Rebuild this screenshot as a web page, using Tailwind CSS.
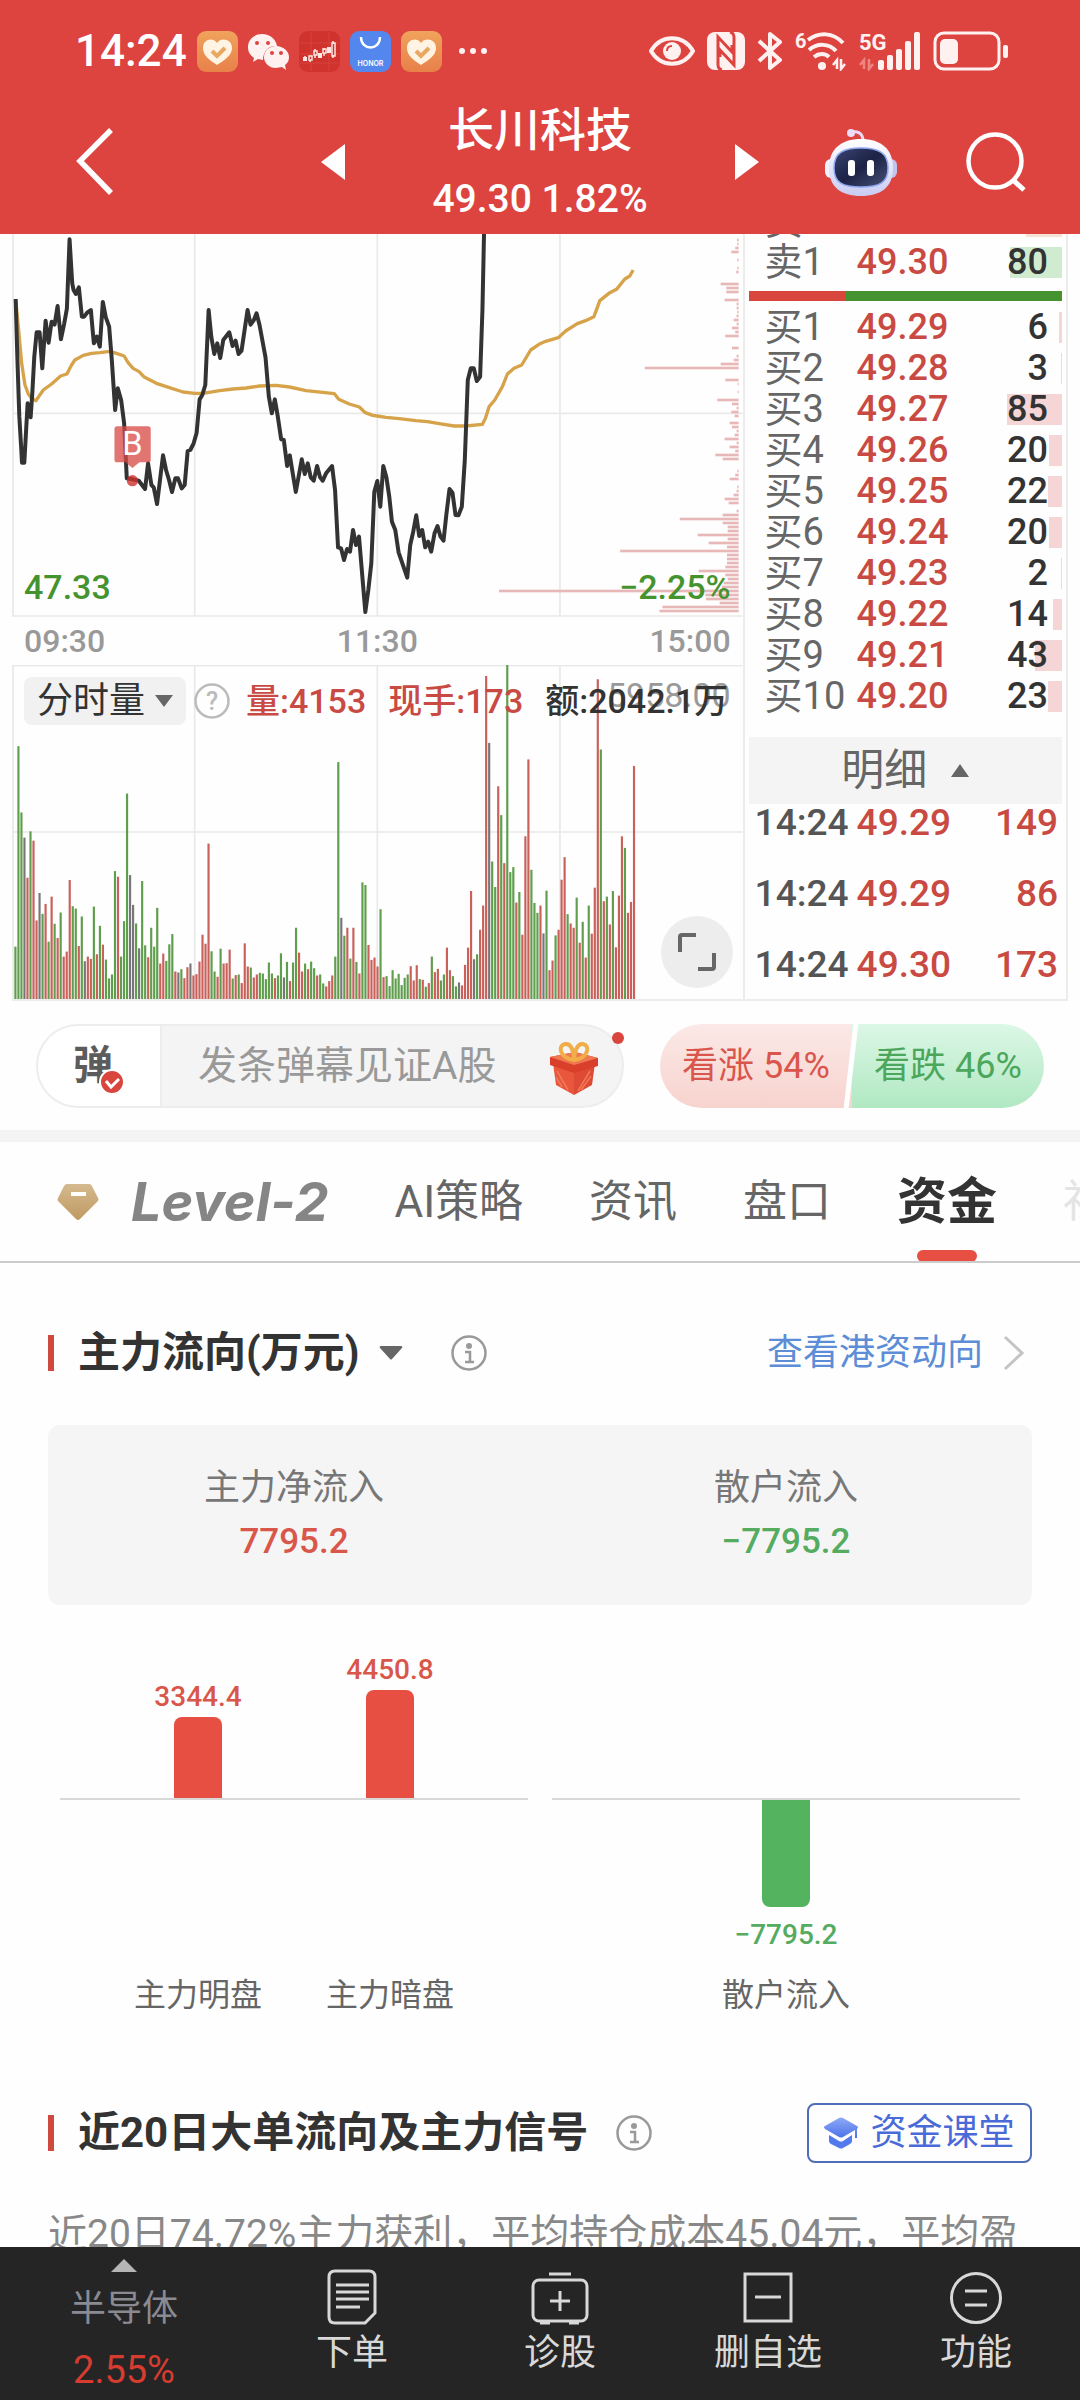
<!DOCTYPE html>
<html lang="zh-CN">
<head>
<meta charset="utf-8">
<meta name="viewport" content="width=device-width, initial-scale=1">
<title>长川科技</title>
<script src="https://cdn.jsdelivr.net/npm/@tailwindcss/browser@4"></script>
</head>
<body class="flex h-screen flex-col overflow-hidden bg-[#fefefe] font-[Roboto,'Noto_Sans_CJK_SC',sans-serif] text-[#333]">

<header class="shrink-0 bg-[#dd4440] text-white">
  <div class="flex h-[102px] items-center justify-between pl-[75px] pr-[71px]">
    <div class="flex items-center gap-[10px]">
      <span class="w-[112px] text-[44px] font-medium leading-none">14:24</span>
      <svg class="size-[41px]" viewBox="0 0 41 41"><defs><linearGradient id="or" x2="0" y2="1"><stop stop-color="#f0a35c"/><stop offset="1" stop-color="#e8804a"/></linearGradient></defs><rect width="41" height="41" rx="9" fill="url(#or)"/><path d="M20 34C12 29 6 24 6 17c0-9 10-11 14-5 4-6 15-4 15 5 0 7-7 12-15 17Z" fill="#fff4e4"/><path d="m15 20 5 5 8-8" fill="none" stroke="#e9a862" stroke-width="4"/></svg>
      <svg class="size-[41px]" viewBox="0 0 41 41" fill="#fff1f0"><path d="M14 3C6 3 0 9 0 16c0 5 2 8 6 11l-1 4 5-3 5 1c0-9 6-15 14-14C28 8 22 3 14 3Z"/><path d="M28 15c-7 0-12 5-12 11s5 11 12 11l6-1 4 3-1-5c3-2 4-5 4-8 0-6-6-11-13-11Z"/><g fill="#dd4440"><circle cx="9" cy="12" r="2"/><circle cx="20" cy="12" r="2"/><circle cx="24" cy="22" r="2"/><circle cx="33" cy="22" r="2"/></g></svg>
      <svg class="size-[41px]" viewBox="0 0 41 41"><rect width="41" height="41" rx="9" fill="#d0332e"/><path d="M12 1v39M30 1v39M1 12h39M1 23h39M1 32h39" stroke="#d8433d" stroke-width="1"/><g fill="none" stroke="#ffe6e2" stroke-width="1.500"><path d="M6 25v5M16 18v2M16 24v3M25 17v2M25 22v3M34 10v3M34 24v3M11 29v2"/><rect x="10" y="25" width="3" height="4"/><rect x="15" y="20" width="3" height="4"/><rect x="24" y="18" width="3" height="4"/><rect x="33" y="12" width="3" height="13"/></g><path d="M4 26h4v4H4zM19 22h4v5h-4zM28 16h4v6h-4z" fill="#ffe6e2"/></svg>
      <svg class="size-[41px]" viewBox="0 0 41 41"><rect width="41" height="41" rx="9" fill="#5487ee"/><path d="M11 6c0 14 19 14 19 0" fill="none" stroke="#fff" stroke-width="2.400"/><text x="20.500" y="35" text-anchor="middle" font-family="Inter" font-size="7" font-weight="600" fill="#fff">HONOR</text></svg>
      <svg class="size-[41px]" viewBox="0 0 41 41"><rect width="41" height="41" rx="9" fill="url(#or)"/><path d="M20 34C12 29 6 24 6 17c0-9 10-11 14-5 4-6 15-4 15 5 0 7-7 12-15 17Z" fill="#fff4e4"/><path d="m15 20 5 5 8-8" fill="none" stroke="#e9a862" stroke-width="4"/></svg>
      <svg class="ml-1 h-2 w-9" viewBox="0 0 36 8" fill="#fff1f0"><circle cx="6" cy="4" r="3"/><circle cx="17" cy="4" r="3"/><circle cx="28" cy="4" r="3"/></svg>
    </div>
    <div class="flex items-center gap-3">
      <svg class="h-8 w-[46px]" viewBox="0 0 46 32" fill="none" stroke="#fff1f0"><path d="M2 16C12-1 34-1 44 16 34 33 12 33 2 16Z" stroke-width="4"/><circle cx="23" cy="16" r="9" fill="#fff1f0" stroke="none"/><path d="M18 16c0-3 2-5 5-5" stroke="#dd4440" stroke-width="2"/></svg>
      <svg class="h-[38px] w-[38px]" viewBox="0 0 38 38"><rect width="38" height="38" rx="8" fill="#fff1f0"/><g fill="none" stroke="#dd4440" stroke-width="3"><path d="M15 38q-4-1-4-5V5l14 15v-7"/><path d="M23 0q4 1 4 5v28L13 18v7"/></g></svg>
      <svg class="h-[38px] w-[26px]" viewBox="0 0 26 38" fill="none" stroke="#fff1f0" stroke-width="4" stroke-linejoin="round"><path d="m2 9 21 19-10 8V2l10 8L2 29"/></svg>
      <svg class="h-[40px] w-[52px]" viewBox="0 0 52 40" fill="none" stroke="#fff1f0" stroke-width="4"><path d="M13 9c11-8 25-8 35 3M14 19c8-7 20-7 27 1M19 26c5-4 11-4 15 0"/><circle cx="27" cy="35" r="4" fill="#fff1f0" stroke="none"/><path d="M42 38V29l-4 5M46 28v10l4-5" stroke-width="2.500"/><text x="0" y="17" font-family="Roboto" font-size="20" font-weight="700" fill="#fff1f0" stroke="none">6</text></svg>
      <svg class="h-[40px] w-[62px]" viewBox="0 0 62 40" fill="#fff1f0"><text x="0" y="19" font-family="Roboto" font-size="22" font-weight="700">5G</text><rect x="19" y="29" width="6" height="10" rx="2"/><rect x="28" y="24" width="6" height="15" rx="2"/><rect x="37" y="18" width="6" height="21" rx="2"/><rect x="46" y="10" width="6" height="29" rx="2"/><rect x="55" y="1" width="6" height="38" rx="2"/><path d="M5 38V29l-4 5M10 28v10l4-5" fill="none" stroke="#ef8580" stroke-width="2.500"/></svg>
      <svg class="h-[40px] w-[76px]" viewBox="0 0 76 40"><rect x="2" y="2" width="64" height="36" rx="9" fill="none" stroke="#fff1f0" stroke-width="3"/><rect x="7" y="8" width="18" height="25" rx="5" fill="#fff1f0"/><rect x="70" y="14" width="5" height="13" rx="2" fill="#fff1f0"/></svg>
    </div>
  </div>
  <div class="grid h-[132px] grid-cols-[1fr_438px_1fr] items-center pb-3">
    <button aria-label="返回" class="ml-[74px] w-10"><svg class="h-[68px] w-10" viewBox="0 0 40 68" fill="none" stroke="#fff" stroke-width="5.500"><path d="M37 2 6 33l31 32"/></svg></button>
    <div class="flex items-center justify-between">
      <button aria-label="上一只"><svg class="h-9 w-6" viewBox="0 0 24 36" fill="#fff"><path d="M24 0v36L0 18Z"/></svg></button>
      <h1 class="flex flex-col items-center gap-6 font-normal">
        <span class="text-[46px] font-medium leading-[50px]">长川科技</span>
        <span class="text-[39px] font-medium leading-[40px]">49.30 1.82%</span>
      </h1>
      <button aria-label="下一只"><svg class="h-9 w-6" viewBox="0 0 24 36" fill="#fff"><path d="M0 0v36l24-18Z"/></svg></button>
    </div>
    <div class="flex items-center justify-end gap-[69px] pr-[53px]">
      <button aria-label="智能助手"><svg class="h-[68px] w-[72px]" viewBox="0 0 72 68"><defs><linearGradient id="hd" x2="0" y2="1"><stop stop-color="#fff"/><stop offset="1" stop-color="#c9cbf2"/></linearGradient><linearGradient id="fc" x2="1" y2="1"><stop stop-color="#3c4372"/><stop offset=".5" stop-color="#1c2346"/><stop offset="1" stop-color="#4a5078"/></linearGradient></defs><path d="M25 5c7-3 13 0 13 8" fill="none" stroke="#efd9f2" stroke-width="3"/><circle cx="26" cy="5" r="4" fill="#ecdcf6"/><rect x="0" y="31" width="12" height="19" rx="6" fill="#f2f1fd"/><rect x="60" y="31" width="12" height="19" rx="6" fill="#c3c4ee"/><path d="M36 11c20 0 32 10 32 29S56 68 36 68 4 59 4 40s12-29 32-29Z" fill="url(#hd)"/><path d="M36 20c18 0 27 5 27 20s-9 19-27 19S9 55 9 40s9-20 27-20Z" fill="url(#fc)" stroke="#8fa6f0" stroke-width="1.500"/><rect x="23" y="32" width="7" height="16" rx="3" fill="#fff"/><rect x="42" y="32" width="7" height="16" rx="3" fill="#fff"/></svg></button>
      <button aria-label="搜索"><svg class="h-[60px] w-[61px]" viewBox="0 0 61 60" fill="none" stroke="#fff" stroke-width="4.500"><circle cx="29" cy="29" r="26.500"/><path d="m47 48 11 10" stroke-width="5"/></svg></button>
    </div>
  </div>
</header>

<main class="min-h-0 flex-1 overflow-hidden">

  <section class="mx-3 grid grid-cols-[734fr_322fr] border-r-2 border-b-2 border-[#ececec]">
    <div class="border-r-2 border-[#ececec]">
      <div class="relative h-[383px]">
        <svg class="block h-full w-full" viewBox="36 12 2196 1149" preserveAspectRatio="none">
          <g stroke="#e9e9e9" stroke-width="5"><path d="M39 0V1158M585 0V1158M1134 0V1158M1683 0V1158M36 550H2232M36 1158H2232"/></g>
          <g id="chips" fill="#e8b7b7"></g>
          <path fill="none" stroke="#d6a34a" stroke-width="10" stroke-linejoin="round" d="M47 207 55 290 65 400 75 465 85 492 95 505 108 512 130 480 155 462 182 438 201 432 215 405 225 390 250 376 275 370 300 368 330 364 350 370 373 378 385 398 400 415 418 425 432 440 470 460 500 470 550 486 585 490 610 490 660 482 700 477 740 474 780 468 830 466 870 471 920 482 1005 491 1018 508 1050 522 1080 531 1098 548 1120 556 1134 558 1160 562 1200 566 1250 572 1285 575 1320 581 1365 588 1400 588 1450 583 1459 565 1470 530 1487 510 1510 470 1525 432 1545 415 1568 405 1595 360 1620 343 1640 334 1678 323 1700 303 1735 281 1760 272 1785 260 1803 212 1830 190 1853 178 1878 147 1893 138 1903 120"/>
          <path fill="none" stroke="#333" stroke-width="12" stroke-linejoin="round" d="M47 207 52 380 58 560 64 660 66 698 73 698 79 590 83 520 92 562 97 490 103 380 110 307 119 307 127 415 137 272 146 338 155 275 164 284 173 228 183 328 193 280 201 236 209 28 217 160 221 180 228 192 237 172 246 260 253 260 262 248 273 240 282 340 291 320 300 350 309 216 318 262 328 290 336 390 346 540 354 475 364 510 373 580 381 745 398 748 417 752 436 777 445 700 455 765 462 772 472 822 490 676 499 720 508 750 517 786 527 745 535 745 546 775 555 765 564 663 572 660 582 640 591 608 600 508 608 495 617 465 627 240 635 320 644 372 653 340 662 384 671 330 689 307 699 348 708 332 717 372 726 362 744 240 753 284 763 270 771 250 780 285 798 382 808 500 817 550 826 508 835 560 845 628 853 630 863 708 871 676 889 786 907 688 916 732 925 700 934 742 943 752 953 708 962 742 970 752 980 730 998 708 1007 780 1016 952 1025 955 1034 990 1043 957 1052 965 1061 900 1070 945 1079 920 1098 1146 1107 1080 1116 1000 1125 785 1134 753 1143 830 1152 708 1161 740 1170 800 1178 875 1188 900 1198 967 1224 1043 1233 945 1242 905 1251 856 1260 918 1269 900 1278 952 1287 935 1296 965 1306 910 1315 888 1324 920 1333 932 1342 850 1351 777 1360 788 1369 855 1378 856 1388 830 1397 690 1406 450 1415 415 1424 415 1433 453 1443 440 1450 240 1455 0"/>
          <path fill="#d84a45" fill-opacity=".76" d="M352 589h93q8 0 8 8v92q0 8-8 8h-26l-21 17-21-17h-25q-8 0-8-8v-92q0-8 8-8Z"/>
          <circle cx="398" cy="752" r="17" fill="#cc322d" fill-opacity=".8"/>
          <text x="398" y="675" text-anchor="middle" font-family="Roboto" font-size="98" fill="#fff">B</text>
        </svg>
        <div class="absolute inset-x-3 bottom-3 flex justify-between text-[34px] font-medium leading-[36px] text-[#45932f]"><span>47.33</span><span>−2.25%</span></div>
      </div>
      <div class="flex h-12 items-center justify-between px-3 text-[32px] font-medium leading-[36px] text-[#999]"><span>09:30</span><span>11:30</span><span>15:00</span></div>
      <div class="relative h-[334px]">
        <svg id="volume" class="block h-full w-full" viewBox="36 45 2196 1008" preserveAspectRatio="none">
          <g stroke="#e9e9e9" stroke-width="5"><path d="M39 47V1053M585 47V1053M1134 47V1053M1683 47V1053M36 47H2232M36 549H2232"/></g>
        </svg>
        <span class="absolute top-3 right-3 text-[34px] leading-[36px] text-[#999]">5958.00</span>
        <div class="absolute inset-x-3 top-3 flex items-center text-[34px] font-medium leading-[48px] whitespace-nowrap">
          <button class="flex h-12 w-[162px] items-center justify-center gap-[10px] rounded-lg bg-[#f1f1f1] text-[36px] font-normal">分时量<svg class="h-3 w-[18px]" viewBox="0 0 18 12" fill="#666"><path d="M0 0h18L9 12Z"/></svg></button>
          <button aria-label="说明" class="ml-2"><svg class="size-9" viewBox="0 0 36 36"><circle cx="18" cy="18" r="16.500" fill="none" stroke="#bbb" stroke-width="2.500"/><text x="18" y="27" text-anchor="middle" font-family="Roboto" font-size="25" fill="#bbb">?</text></svg></button>
          <span class="ml-4 text-[#c94a42]">量:4153</span>
          <span class="ml-[22px] text-[#c94a42]">现手:173</span>
          <span class="ml-[22px]">额:2042.1万</span>
        </div>
        <button aria-label="全屏" class="absolute right-[10px] bottom-[11px] flex size-[72px] items-center justify-center rounded-full bg-[#ededed]"><svg class="size-[38px]" viewBox="0 0 38 38" fill="none" stroke="#666" stroke-width="4"><path d="M2 19V4q0-2 2-2h14M36 20v14q0 2-2 2H20"/></svg></button>
      </div>
    </div>

    <div class="px-1">
      <div class="flex h-[8px] items-end overflow-hidden"><table class="w-full table-fixed"><tbody id="ask2"></tbody></table></div>
      <table class="w-full table-fixed"><tbody id="ask1"></tbody></table>
      <div class="mt-[8px] mb-[6px] flex h-[10px]"><span class="w-[31%] bg-[#d8463e]"></span><span class="flex-1 bg-[#45932f]"></span></div>
      <table class="w-full table-fixed"><tbody id="bids"></tbody></table>
      <button class="mt-[20px] flex h-[67px] w-full items-center justify-center gap-6 bg-[#f4f4f4] text-[43px] leading-[67px] text-[#666]">明细<svg class="h-[13px] w-[18px]" viewBox="0 0 18 13" fill="#666"><path d="M0 13h18L9 0Z"/></svg></button>
      <div class="h-[195px] overflow-hidden"><table class="-mt-[17px] w-full table-fixed"><tbody id="trades"></tbody></table></div>
    </div>
  </section>

  <section class="grid h-[129px] grid-cols-[588fr_384fr] items-center gap-9 px-9">
    <div class="relative flex h-[84px] min-w-0 items-center rounded-full border-2 border-[#ededed] bg-[#f4f4f4]">
      <button aria-label="弹幕" class="flex h-full w-[124px] shrink-0 items-center justify-center rounded-l-full border-r-2 border-[#ededed] bg-white">
        <span class="relative mr-3 text-[40px] font-bold leading-[50px] text-[#5c5c5c]">弹
          <svg class="absolute -right-3 -bottom-1 size-[26px]" viewBox="0 0 26 26"><circle cx="13" cy="13" r="12" fill="#d8463e" stroke="#fff" stroke-width="2"/><path d="m7 12 5 6 8-8" fill="none" stroke="#fff" stroke-width="3"/></svg></span>
      </button>
      <input aria-label="发送弹幕" placeholder="发条弹幕见证A股" class="h-full w-0 flex-1 bg-transparent pl-9 text-[39px] outline-none placeholder:text-[#999]">
      <button aria-label="礼物" class="mr-[22px] shrink-0"><svg class="mt-1 h-[54px] w-[52px]" viewBox="0 0 52 54"><path d="m5 22 21 6v26L8 44Z" fill="#e8573c"/><path d="m47 22-21 6v26l18-10Z" fill="#de4a33"/><path d="m30 50 12-20M33 49l10-14M14 46 8 36M20 49 9 30" stroke="#f0795a" stroke-width="1.500"/><path d="m2 16 25-5 23 6v8l-24 7L2 24Z" fill="#d93f2b"/><path d="m2 16 25-5 23 6-24 7Z" fill="#f07a50"/><path d="M26 19C12 17 9 5 17 3c6-1 9 7 9 16 0-9 4-17 9-16 8 2 5 14-9 16Z" fill="none" stroke="#f1ae48" stroke-width="4"/></svg></button>
      <span class="absolute -right-[2px] top-[6px] size-3 rounded-full bg-[#d8463e]"></span>
    </div>
    <div class="relative grid h-[84px] grid-cols-2 overflow-hidden rounded-full text-[36px] whitespace-nowrap">
      <button class="bg-linear-to-b from-[#fbe9e7] to-[#f7d3ce] text-[#d8564c]">看涨 54%</button>
      <button class="bg-linear-to-b from-[#dcf7e6] to-[#b0e8c2] text-[#4ca65c]">看跌 46%</button>
      <svg class="absolute inset-y-0 left-1/2 h-full w-5 -translate-x-1/2" viewBox="0 0 20 84"><path d="M14 -1 4 85" stroke="#fff" stroke-width="5"/></svg>
    </div>
  </section>

  <div class="h-3 bg-[#f4f4f4]"></div>

  <nav class="flex h-[121px] items-center gap-[66px] overflow-hidden border-b-2 border-[#ccc] pl-[57px] text-[44px] leading-[60px] whitespace-nowrap text-[#666]">
    <a href="#" class="flex items-center gap-8"><svg class="h-[38px] w-[42px]" viewBox="0 0 42 38"><defs><linearGradient id="gd" x2="0" y2="1"><stop stop-color="#d5b98f"/><stop offset="1" stop-color="#bf9a62"/></linearGradient></defs><path d="M10 1h22q2 0 3 2l6 12q1 2 0 3L23 36q-2 2-4 0L1 18q-1-1 0-3L7 3q1-2 3-2Z" fill="url(#gd)"/><path d="M14 11h15" stroke="#fff" stroke-width="4"/></svg><span class="font-[Inter,sans-serif] text-[54px] font-bold text-[#858585] italic">Level-2</span></a>
    <a href="#">AI策略</a>
    <a href="#">资讯</a>
    <a href="#">盘口</a>
    <a href="#" class="relative text-[50px] font-bold leading-[120px] text-[#333]">资金<span class="absolute bottom-0 left-1/2 h-3 w-[60px] -translate-x-1/2 rounded-full bg-[#e64f42]"></span></a>
    <a href="#" class="text-[#e4e4e4]">社区</a>
  </nav>

  <section class="px-12 pt-[72px]">
    <div class="flex h-9 items-center">
      <span class="mr-6 h-9 w-[6px] bg-[#d0493f]"></span>
      <h2 class="text-[42px] font-bold leading-[42px]">主力流向(万元)</h2>
      <button aria-label="切换单位" class="ml-5"><svg class="block h-[14px] w-6" viewBox="0 0 24 14" fill="#666"><path d="M2 0h20q2 0 1 2L13 13q-1 1-2 0L1 2Q0 0 2 0Z"/></svg></button>
      <button aria-label="说明" class="ml-12"><svg class="block size-9" viewBox="0 0 36 36"><circle cx="18" cy="18" r="16.500" fill="none" stroke="#999" stroke-width="2.500"/><circle cx="18" cy="11" r="3" fill="#999"/><path d="M14 17h5v10M14 27h9" fill="none" stroke="#999" stroke-width="2.500"/></svg></button>
      <a href="#" class="ml-auto flex items-center gap-5 pr-2 text-[36px] leading-9 text-[#5c8dd6]">查看港资动向<svg class="h-9 w-[21px]" viewBox="0 0 21 36" fill="none" stroke="#c4c4c4" stroke-width="3"><path d="m2 2 17 16L2 34"/></svg></a>
    </div>
    <dl class="mt-[54px] grid grid-cols-2 rounded-xl bg-[#f5f5f5] py-9 text-center text-[36px] leading-[54px]">
      <div><dt class="text-[#777]">主力净流入</dt><dd class="text-[35px] font-medium text-[#d9564a]">7795.2</dd></div>
      <div><dt class="text-[#777]">散户流入</dt><dd class="text-[35px] font-medium text-[#55ab60]">−7795.2</dd></div>
    </dl>
    <div class="grid grid-cols-2 gap-6 px-3 text-center text-[32px] leading-10 text-[#666]">
      <div>
        <div class="flex h-[195px] items-end justify-center border-b-2 border-[#d9d9d9] text-[28px] font-medium text-[#d9564a]">
          <div class="flex w-[192px] flex-col items-center">3344.4<span class="w-12 rounded-t-lg bg-[#e64f42]" style="height:81px"></span></div>
          <div class="flex w-[192px] flex-col items-center">4450.8<span class="w-12 rounded-t-lg bg-[#e64f42]" style="height:108px"></span></div>
        </div>
        <div class="flex justify-center pt-[175px]"><span class="w-[192px]">主力明盘</span><span class="w-[192px]">主力暗盘</span></div>
      </div>
      <div>
        <div class="h-[195px] border-b-2 border-[#d9d9d9]"></div>
        <div class="flex h-[175px] flex-col items-center gap-2 text-[28px] font-medium text-[#55ab60]"><span class="w-12 rounded-b-lg bg-[#53b35e]" style="height:107px"></span>−7795.2</div>
        <span>散户流入</span>
      </div>
    </div>
  </section>

  <section class="mt-[88px] px-12">
    <div class="flex h-[60px] items-center">
      <span class="mr-6 h-9 w-[6px] bg-[#d0493f]"></span>
      <h2 class="text-[42px] font-bold leading-[42px]">近20日大单流向及主力信号</h2>
      <button aria-label="说明" class="ml-7"><svg class="block size-9" viewBox="0 0 36 36"><circle cx="18" cy="18" r="16.500" fill="none" stroke="#999" stroke-width="2.500"/><circle cx="18" cy="11" r="3" fill="#999"/><path d="M14 17h5v10M14 27h9" fill="none" stroke="#999" stroke-width="2.500"/></svg></button>
      <button class="ml-auto flex h-[60px] w-[225px] items-center justify-center gap-3 rounded-lg border-2 border-[#4f6db8] text-[36px] leading-[56px] text-[#4a6ad8]"><svg class="h-[32px] w-[34px]" viewBox="0 0 34 32"><defs><linearGradient id="bl" x2="0" y2="1"><stop stop-color="#8fa9f5"/><stop offset="1" stop-color="#4b73ea"/></linearGradient></defs><path d="M15 1q2-1 4 0l14 8q2 1 0 3v9h-2v-8L19 20q-2 1-4 0L1 12q-2-2 0-3Z" fill="url(#bl)"/><path d="m5 18 10 6q2 1 4 0l9-6v6q0 2-2 3l-7 4q-2 1-4 0l-8-4q-2-1-2-3Z" fill="#527aec"/></svg>资金课堂</button>
    </div>
    <p class="mt-[41px] text-[39px] leading-[60px] whitespace-nowrap text-[#888]">近20日74.72%主力获利，平均持仓成本45.04元，平均盈</p>
  </section>
</main>

<footer class="grid h-[153px] shrink-0 grid-cols-[248fr_208fr_208fr_208fr_208fr] bg-[#252525] text-[36px] leading-10 text-[#d8d8d8]">
  <a href="#" class="flex flex-col items-center pt-3 text-[#8a8a92]"><svg class="h-[13px] w-[26px]" viewBox="0 0 26 13" fill="#b5b5b5"><path d="M0 13h26L13 0Z"/></svg><span class="mt-[17px]">半导体</span><span class="mt-[21px] text-[38px] text-[#d63c2f]">2.55%</span></a>
  <a href="#" class="flex flex-col items-center gap-2 pt-[22px]"><svg class="h-14 w-[50px]" viewBox="0 0 50 56" fill="none" stroke="#d8d8d8" stroke-width="3"><path d="M8 2h34q6 0 6 6v36L38 54H8q-6 0-6-6V8q0-6 6-6Z"/><path d="M9 16h33M9 23h33M9 30h33M9 38h24"/></svg>下单</a>
  <a href="#" class="flex flex-col items-center gap-2 pt-[22px]"><svg class="h-14 w-[58px]" viewBox="0 0 58 56" fill="none" stroke="#d8d8d8" stroke-width="3"><rect x="2" y="11" width="54" height="41" rx="6"/><path d="M18 5h22M29 22v20M19 32h20M9 54h10M38 54h10"/></svg>诊股</a>
  <a href="#" class="flex flex-col items-center gap-2 pt-[22px]"><svg class="h-14 w-[50px]" viewBox="0 0 50 56" fill="none" stroke="#d8d8d8" stroke-width="3"><path d="M2 5h46v47H2ZM12 28h26"/></svg>删自选</a>
  <a href="#" class="flex flex-col items-center gap-2 pt-[22px]"><svg class="h-14 w-[54px]" viewBox="0 0 54 56" fill="none" stroke="#d8d8d8" stroke-width="3"><circle cx="27" cy="29" r="24.500"/><path d="M16 22h22M16 36h22"/></svg>功能</a>
</footer>

<script>
  // Minute volume: colour letter (r up, g down, k flat) and bar top
  const minutes = "g895 g290 g490 k566 r687 g547 r575 r816 k733 g796 r766 g880 r744 g826 r869 g792 r925 r910 r694 g773 g780 r893 g804 k939 r925 r932 g774 r918 g832 r889 g934 g991 g979 g667 r684 g925 g818 g433 k679 k769 g825 k900 g697 g891 r927 g838 g895 g778 r946 r916 g938 g888 g857 r970 k973 g963 r990 r957 k946 r982 r978 r940 r859 r886 r584 g909 g970 r986 g901 r946 r945 r904 g991 r981 g979 r1005 r885 r955 g958 r988 r979 g974 g976 g993 g943 g976 r990 g982 g915 k988 g941 r999 g943 g838 r913 r970 g946 r963 g940 g960 r982 g979 g1006 r1015 r999 r982 g925 g338 k808 g862 r838 g931 r838 g941 r976 g701 g709 r890 r935 r928 r955 g782 r987 g984 g1014 g966 g991 g977 g1011 g989 g979 r954 r997 r951 g993 r995 g1016 r1005 g925 r972 r962 g997 g979 r898 r966 g984 g1015 k1003 r1012 r950 r898 r727 k933 g918 r844 r771 r78 k280 g638 g715 r411 g498 r643 g45 g670 g655 r762 g730 r859 r562 r330 g663 g763 g793 r771 k855 g726 r966 r937 g861 r844 r693 r625 g797 r825 r838 g747 r883 g820 r928 g771 r856 r717 r88 g300 r758 g744 r828 g727 r897 r741 r562 g597 r793 r760 r350".split(" ");
  const colour = { r: "#c9605a", g: "#5f9e4c", k: "#777" };
  document.getElementById("volume").insertAdjacentHTML("beforeend", minutes.map((m, i) => {
    const top = +m.slice(1);
    return `<rect x="${43 + i * 9.07}" y="${top}" width="6.500" height="${1053 - top}" fill="${colour[m[0]]}"/>`;
  }).join(""));

  // Price distribution: row position and left end of each chip bar
  const chips = [[30,1135],[42,1136],[54,1130],[66,1118],[90,1136],[114,1136],[126,1133],[162,1086],[174,1103],[186,1103],[210,1098],[222,1134],[234,1134],[246,1136],[258,1134],[270,1125],[282,1134],[294,1120],[306,1130],[318,1100],[354,1120],[378,1134],[390,1125],[402,1086],[414,858],[450,1100],[462,1137],[486,1137],[510,1076],[522,1120],[534,1134],[546,1118],[558,1128],[579,1113],[591,1120],[603,1134],[615,1128],[627,1098],[639,1134],[651,1113],[663,1130],[675,1070],[687,1092],[723,1136],[735,1130],[747,1113],[771,1136],[783,1134],[795,1125],[807,1098],[819,1110],[843,1134],[855,1092],[867,963],[879,1092],[891,1107],[903,1107],[915,1017],[927,1107],[939,1050],[951,1105],[963,784],[975,1105],[987,1105],[999,1105],[1011,1100],[1023,1020],[1035,1100],[1047,1107],[1059,1095],[1071,1090],[1083,420],[1095,1040],[1107,1042],[1119,1083],[1131,911],[1143,902]];
  document.getElementById("chips").innerHTML = chips.map(([y, x]) => `<rect x="${1080 + x}" y="${y - 4}" width="${1140 - x}" height="8"/>`).join("");

  const level = (name, price, qty, bar, tint) => `<tr class="h-[41px]">
    <td class="w-[108px] pl-4 text-[38px] leading-[41px] whitespace-nowrap text-[#666]">${name}</td>
    <td class="text-[36px] font-medium leading-[41px] text-[#c94a42]">${price}</td>
    <td class="relative w-[100px] pr-[14px] text-right text-[36px] font-medium leading-[41px]"><span class="absolute inset-y-[5px] right-0 ${tint}" style="width:${bar}px"></span><span class="relative">${qty}</span></td></tr>`;
  const red = "bg-[#f5d5d5]", green = "bg-[#d0ebcf]";
  document.getElementById("ask2").innerHTML = level("卖2", "49.31", 60, 36, "bg-[#f5e3d5]");
  document.getElementById("ask1").innerHTML = level("卖1", "49.30", 80, 52, green);
  document.getElementById("bids").innerHTML = [[6,3],[3,1],[85,55],[20,13],[22,14],[20,13],[2,1],[14,9],[43,27],[23,14]]
    .map(([q, w], i) => level("买" + (i + 1), (49.29 - i / 100).toFixed(2), q, w, red)).join("");
  document.getElementById("trades").innerHTML = [["49.29",149],["49.29",86],["49.30",173]].map(([p, v]) => `<tr class="h-[71px] text-[37px] font-medium leading-[71px] text-[#c94a42]">
    <td class="w-[108px] pl-[6px] text-[#555]">14:24</td><td>${p}</td><td class="w-[100px] pr-1 text-right">${v}</td></tr>`).join("");
</script>
</body>
</html>
